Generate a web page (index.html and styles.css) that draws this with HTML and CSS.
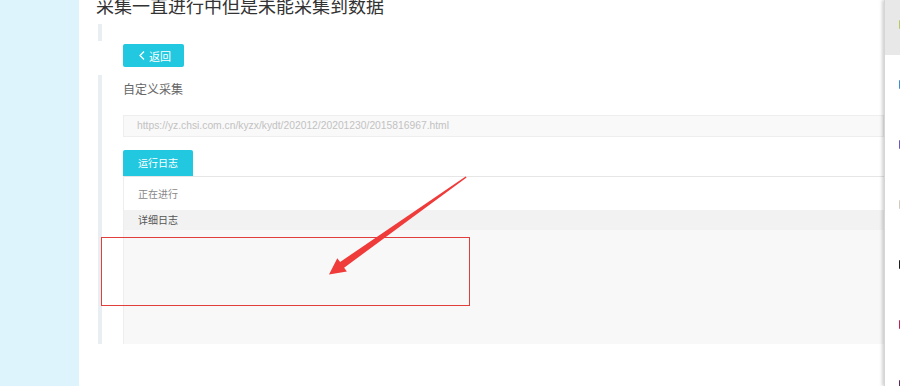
FILE: index.html
```html
<!DOCTYPE html>
<html lang="zh-CN">
    <head>
        <meta charset="utf-8">
        <title>采集一直进行中但是未能采集到数据</title>
        <link rel="stylesheet" href="styles.css">
    </head>
    <body>
    <div class="page">
        <div class="side"></div>
        <div class="main">
            <h1 class="title">采集一直进行中但是未能采集到数据</h1>
            <div class="quote quote-empty"></div>
            <a class="btn-back">
                <svg width="6" height="9" viewBox="0 0 6 9"><polyline points="5,0.5 1,4.5 5,8.5" fill="none" stroke="#fff" stroke-width="1.3"/></svg>
                <span>返回</span>
            </a>
            <div class="quote quote-body">
                <div class="label">自定义采集</div>
                <div class="url">https://yz.chsi.com.cn/kyzx/kydt/202012/20201230/2015816967.html</div>
                <div class="tabs">
                    <span class="tab current">运行日志</span>
                </div>
                <div class="tab-panel">
                    <div class="row status">正在进行</div>
                    <div class="row head">详细日志</div>
                    <div class="log"></div>
                </div>
            </div>
        </div>
        <div class="rail">
            <div class="rail-top"><i class="dot c1"></i></div>
            <ul>
                <li><i class="dot c2"></i></li>
                <li><i class="dot c3"></i></li>
                <li><i class="dot c4"></i></li>
                <li><i class="dot c5"></i></li>
                <li><i class="dot c6"></i></li>
                <li><i class="dot c7"></i></li>
            </ul>
        </div>

        <!-- annotation -->
        <div class="mark-box"></div>
        <svg class="mark-arrow" width="900" height="386" viewBox="0 0 900 386">
            <polygon points="466.6,177.6 344.1,267.7 346.9,271.6 329,274.5 337.3,258.2 340.1,262.0 465.6,176.4" fill="#f03b3b"/>
        </svg>
    </div>
    </body>
</html>
```

FILE: styles.css
```css
*{padding:0; margin:0; list-style:none; border:0; box-sizing:border-box;}
body{font-family:"Noto Sans CJK SC", "Liberation Sans", sans-serif; color:#333; background:#fff;}
.page{display:flex; width:900px; height:386px; overflow:hidden; position:relative;}
.side{width:79px; flex-shrink:0; background:#def4fc;}
.main{flex:1; overflow:hidden; padding-left:19px;}

.title{font-size:18px; font-weight:normal; line-height:18px; margin:-4px 0 0 -2px; color:#333; white-space:nowrap;}

.quote{border-left:4px solid #e9eef3;}
.quote-empty{height:17px; margin-top:10px;}
.btn-back{display:flex; align-items:center; width:61px; height:23px; margin:3px 0 0 25px; padding-left:16px; gap:4px; background:#22c8e0; border-radius:2px; color:#fff; font-size:11px; cursor:pointer;}
.btn-back svg{display:block;}

.quote-body{margin-top:8px; padding:4px 0 0 21px; height:269px;}
.label{font-size:12px; line-height:20px; color:#666;}
.url{margin-top:16px; height:22px; border:1px solid #eee; background:#f9f9f9; padding-left:13px; font-family:"Liberation Sans", sans-serif; font-size:10.3px; line-height:20px; color:#c2c2c2; white-space:nowrap; overflow:hidden;}

.tabs{margin-top:13px; display:flex;}
.tab{width:70px; height:26px; line-height:26px; text-align:center; font-size:10px; color:#fff; background:#22c8e0; border-radius:2px 2px 0 0;}
.tab-panel{border-top:1px solid #e6e6e6; border-left:1px solid #eee;}
.row{padding-left:14px; font-size:10px; color:#888;}
.row.status{height:33px; line-height:33px;}
.row.head{height:20px; line-height:20px; background:#f2f2f2; color:#555;}
.log{height:114px; background:#f8f8f8;}

.rail{width:16px; flex-shrink:0; position:relative; background:#fff; box-shadow:-2px 0 3px rgba(0,0,0,0.18); border-left:1px solid #d6d6d6; overflow:hidden;}
.rail-top{height:55px; background:#e8e8e8; padding-top:20px;}
.rail ul li{height:60px; padding-top:25px;}
.dot{display:block; width:3px; height:9px; margin-left:14px; border-radius:1px 0 0 1px;}
.c1{background:#b8c860;}
.c2{background:#3a8fdc;}
.c3{background:#6a58c8;}
.c4{background:#d2cbbd;}
.c5{background:#1e1e1e;}
.c6{background:#c4214c;}
.c7{background:#5a2a5e;}

.mark-box{position:absolute; left:101px; top:237px; width:369px; height:69px; border:1px solid #e23e3e;}
.mark-arrow{position:absolute; left:0; top:0;}
```
